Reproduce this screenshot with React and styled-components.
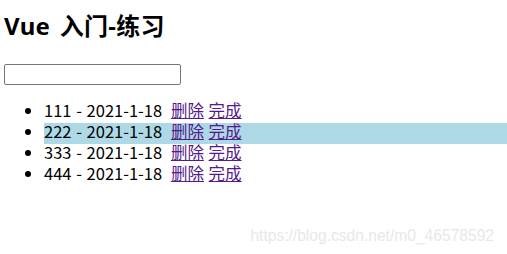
import React from 'react'
import styled, { createGlobalStyle } from 'styled-components'

const GlobalStyle = createGlobalStyle`
  html, body {
    margin: 0;
    padding: 0;
    background: #fff;
  }
  body {
    font-family: "Noto Sans CJK SC", "Noto Sans", sans-serif;
    color: #000;
  }
`

const todos = [
  { id: 1, name: '111', date: '2021-1-18', done: false },
  { id: 2, name: '222', date: '2021-1-18', done: true },
  { id: 3, name: '333', date: '2021-1-18', done: false },
  { id: 4, name: '444', date: '2021-1-18', done: false },
]

function App() {
  return (
    <Page>
      <GlobalStyle />
      <Title>Vue 入门-练习</Title>
      <NewTodo type="text" />
      <TodoList>
        {todos.map(t => (
          <TodoItem key={t.id} $active={t.done}>
            {t.name} - {t.date} <Action href="#" $first>删除</Action> <Action href="#">完成</Action>
          </TodoItem>
        ))}
      </TodoList>
      <Watermark>https://blog.csdn.net/m0_46578592</Watermark>
    </Page>
  )
}

export default App

const Page = styled.div`
  position: relative;
  width: 507px;
  height: 254px;
  padding: 0 4px;
  box-sizing: border-box;
  overflow: hidden;
`

const Title = styled.h1`
  margin: 11px 0 23px;
  font-family: "Noto Sans", "Noto Sans CJK SC", sans-serif;
  font-size: 24px;
  line-height: 30px;
  font-weight: 700;
  word-spacing: 3px;
  letter-spacing: 0.3px;
`

const NewTodo = styled.input`
  display: block;
  box-sizing: border-box;
  width: 177px;
  height: 21px;
  margin: 0;
  padding: 1px 2px;
  border: 1px solid #767676;
  border-radius: 2px;
  background: #fff;
  font-size: 13px;
`

const TodoList = styled.ul`
  margin: 17px 0 0;
  padding-left: 40px;
  list-style: disc;
`

// padding-bottom zamiast line-height zeby linia bazowa byla wyzej
const TodoItem = styled.li`
  font-size: 16.5px;
  line-height: 17px;
  word-spacing: 1px;
  padding-bottom: 4px;
  margin-right: -4px;
  background: ${props => (props.$active ? '#add8e6' : 'transparent')};
`

const Action = styled.a`
  color: #551a8b;
  text-decoration: underline;
  cursor: pointer;
  margin-left: ${props => (props.$first ? '4px' : '0')};
`

const Watermark = styled.div`
  position: absolute;
  right: 13px;
  top: 227px;
  font-family: "Liberation Sans", Arial, sans-serif;
  font-size: 15.6px;
  color: #e8e8e8;
  white-space: nowrap;
  pointer-events: none;
`
